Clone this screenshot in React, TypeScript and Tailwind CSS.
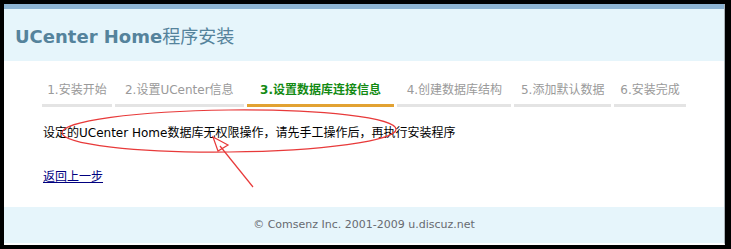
const FONT = '"DejaVu Sans", Verdana, "Noto Sans CJK SC", sans-serif';

interface Step {
  label: string;
  width: string;
  active?: boolean;
}

const STEPS: Step[] = [
  { label: '1.安装开始', width: 'w-[70px]' },
  { label: '2.设置UCenter信息', width: 'w-[129px]' },
  { label: '3.设置数据库连接信息', width: 'w-[148px]', active: true },
  { label: '4.创建数据库结构', width: 'w-[114px]' },
  { label: '5.添加默认数据', width: 'w-[97px]' },
  { label: '6.安装完成', width: 'w-[72px]' },
];

function Annotation() {
  // hand-drawn red ellipse + arrow over the message
  return (
    <svg className="pointer-events-none absolute left-0 top-0" width="731" height="249" fill="none">
      <ellipse cx="229" cy="131" rx="167" ry="21" stroke="#e83a3a" strokeWidth="1.2" transform="rotate(-0.6 229 131)" />
      <path d="M253 187 L220 146" stroke="#e83a3a" strokeWidth="1.2" />
      <path d="M213 137 L218 151 L228 145 Z" stroke="#e83a3a" strokeWidth="1.2" fill="white" fillOpacity="0" />
    </svg>
  );
}

export default function App() {
  return (
    <div className="relative h-[249px] w-[731px] bg-black pl-[4px] pt-[4px]" style={{ fontFamily: FONT }}>
      <div className="flex h-[241px] w-[721px] flex-col border-r border-b-2 border-r-[#a9b3b8] border-b-white">
        <div className="h-[5px] bg-[#8db3d2]" />
        <div className="flex h-[52px] items-center bg-[#e6f5fb] pl-[11px] pt-[2px]">
          <h1 className="text-[18px] font-bold text-[#55839c]">
            UCenter Home<span className="font-normal">程序安装</span>
          </h1>
        </div>

        <div className="flex h-[146px] flex-col bg-white px-[38px] pt-[19px]">
          <div className="flex gap-[3px]">
            {STEPS.map((s) => (
              <div
                key={s.label}
                className={`${s.width} border-b-[3px] pb-[4px] text-center text-[12px] leading-[20px] ${
                  s.active ? 'border-[#e2a232] font-bold text-[#138a13]' : 'border-[#e4e4e4] text-[#9a9a9a]'
                }`}
              >
                {s.label}
              </div>
            ))}
          </div>
          <p className="mt-[16px] pl-[1px] text-[12px] leading-[20px] text-black">
            设定的UCenter Home数据库无权限操作，请先手工操作后，再执行安装程序
          </p>
          <a href="#" className="mt-[24px] self-start pl-[1px] text-[12px] leading-[20px] text-[#00007f] underline">
            返回上一步
          </a>
        </div>

        <div className="flex h-[36px] items-center justify-center bg-[#e6f5fb] text-[11px] text-[#666a70]">
          © Comsenz Inc. 2001-2009 u.discuz.net
        </div>
      </div>
      <Annotation />
    </div>
  );
}
